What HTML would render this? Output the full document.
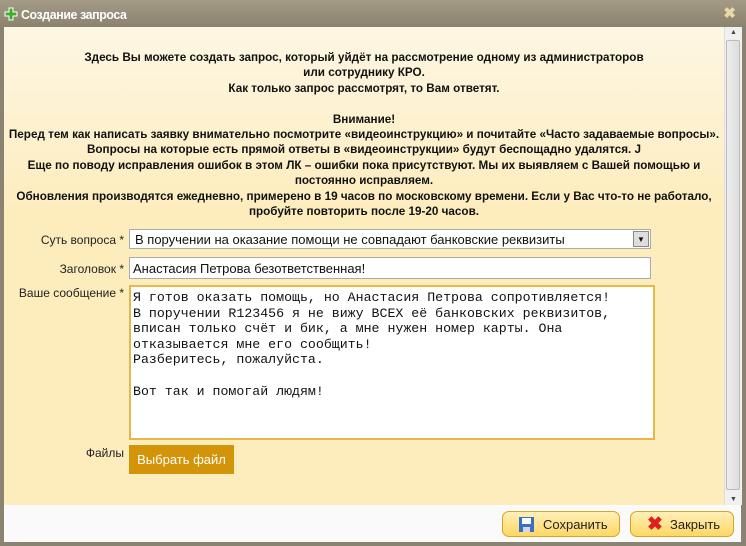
<!DOCTYPE html><html><head><meta charset="utf-8"><style>
body{margin:0;width:746px;height:546px;background:#8b8371;font-family:"Liberation Sans",sans-serif;position:relative;overflow:hidden}
.title{position:absolute;left:0;top:0;width:746px;height:28px;background:linear-gradient(#a39b86,#8a826d)}
.title span{position:absolute;left:21px;top:7px;color:#fff;font-weight:bold;font-size:13px;letter-spacing:-.4px;transform:scaleX(.95);transform-origin:left}
.plus{position:absolute;left:4px;top:7px;width:14px;height:14px}
.x{position:absolute;right:10px;top:4px;color:#e8d9a8;font-weight:bold;font-size:15px}
.content{position:absolute;left:4px;top:27px;width:720px;height:478px;background:linear-gradient(#fdf6e3,#fdecbc 40%,#fdecbc)}
.sb{position:absolute;left:724px;top:27px;width:17px;height:478px;background:#f0f0f0;border-left:1px solid #ddd}
.thumb{position:absolute;left:1px;top:13px;width:14px;height:450px;background:linear-gradient(90deg,#eee,#ddd);border:1px solid #bbb;border-radius:2px;box-sizing:border-box}
.info{position:absolute;left:0;width:720px;top:23px;text-align:center;font-weight:bold;font-size:11.7px;line-height:15.4px;color:#111;white-space:nowrap}
.lbl{position:absolute;right:600px;font-size:12px;color:#222;text-align:right}
.f{position:absolute;background:#fff;box-sizing:border-box;font-size:13px;color:#111}
.footer{position:absolute;left:4px;top:505px;width:737px;height:37px;background:#fafafa}
.btn{position:absolute;top:511px;height:26px;border:1px solid #d9a520;border-radius:7px;background:linear-gradient(#fff0b8,#fdd865);box-sizing:border-box;font-size:13px;color:#222}
</style></head><body>
<div class="title"><svg class="plus" viewBox="0 0 14 14"><path d="M5 1h4v4h4v4h-4v4h-4v-4h-4v-4h4z" fill="#3fae2a" stroke="#fff" stroke-width="1"/></svg><span>Создание запроса</span><div class="x">✖</div></div>
<div class="content">
<div class="info">Здесь Вы можете создать запрос, который уйдёт на рассмотрение одному из администраторов<br>или сотруднику КРО.<br>Как только запрос рассмотрят, то Вам ответят.<br><br>Внимание!<br>Перед тем как написать заявку внимательно посмотрите «видеоинструкцию» и почитайте «Часто задаваемые вопросы».<br>Вопросы на которые есть прямой ответы в «видеоинструкции» будут беспощадно удалятся. J<br>Еще по поводу исправления ошибок в этом ЛК – ошибки пока присутствуют. Мы их выявляем с Вашей помощью и<br>постоянно исправляем.<br>Обновления производятся ежедневно, примерено в 19 часов по московскому времени. Если у Вас что-то не работало,<br>пробуйте повторить после 19-20 часов.</div>
<div class="lbl" style="top:206px">Суть вопроса *</div>
<div class="lbl" style="top:235px">Заголовок *</div>
<div class="lbl" style="top:259px">Ваше сообщение *</div>
<div class="lbl" style="top:419px">Файлы</div>
<div class="f" style="left:125px;top:202px;width:522px;height:20px;border:1px solid #aaa;padding:2px 5px">В поручении на оказание помощи не совпадают банковские реквизиты<div style="position:absolute;right:1px;top:1px;width:16px;height:16px;background:#ddd;border:1px solid #888;box-sizing:border-box;font-size:8px;text-align:center;line-height:15px">▼</div></div>
<div class="f" style="left:125px;top:230px;width:522px;height:22px;border:1px solid #aaa;padding:3px 3px">Анастасия Петрова безответственная!</div>
<div class="f" style="left:125px;top:258px;width:526px;height:155px;border:2px solid #e9b649;padding:3px 2px;font-family:'Liberation Mono',monospace;font-size:13.25px;line-height:15.6px;white-space:pre">Я готов оказать помощь, но Анастасия Петрова сопротивляется!
В поручении R123456 я не вижу ВСЕХ её банковских реквизитов,
вписан только счёт и бик, а мне нужен номер карты. Она
отказывается мне его сообщить!
Разберитесь, пожалуйста.

Вот так и помогай людям!</div>
<div style="position:absolute;left:125px;top:418px;width:105px;height:29px;background:#d4940a;color:#fff;font-size:13px;text-align:center;line-height:29px">Выбрать файл</div>
</div>
<div class="sb"><div style="font-size:7px;color:#444;text-align:center;margin-top:2px">▲</div><div class="thumb"></div><div style="position:absolute;bottom:2px;width:17px;font-size:7px;color:#444;text-align:center">▼</div></div>
<div class="footer"></div>
<div class="btn" style="left:502px;width:118px"><svg style="position:absolute;left:15px;top:4px" width="17" height="17" viewBox="0 0 17 17"><rect x="1" y="1" width="15" height="15" fill="#3a6fc4"/><rect x="4" y="2" width="9" height="6" fill="#fff"/><rect x="5" y="11" width="7" height="5" fill="#cfd8e8"/></svg><span style="position:absolute;left:40px;top:5px">Сохранить</span></div>
<div class="btn" style="left:630px;width:104px"><span style="position:absolute;left:16px;top:1px;color:#e02020;font-size:19px;font-weight:bold">✖</span><span style="position:absolute;left:39px;top:5px">Закрыть</span></div>
</body></html>
